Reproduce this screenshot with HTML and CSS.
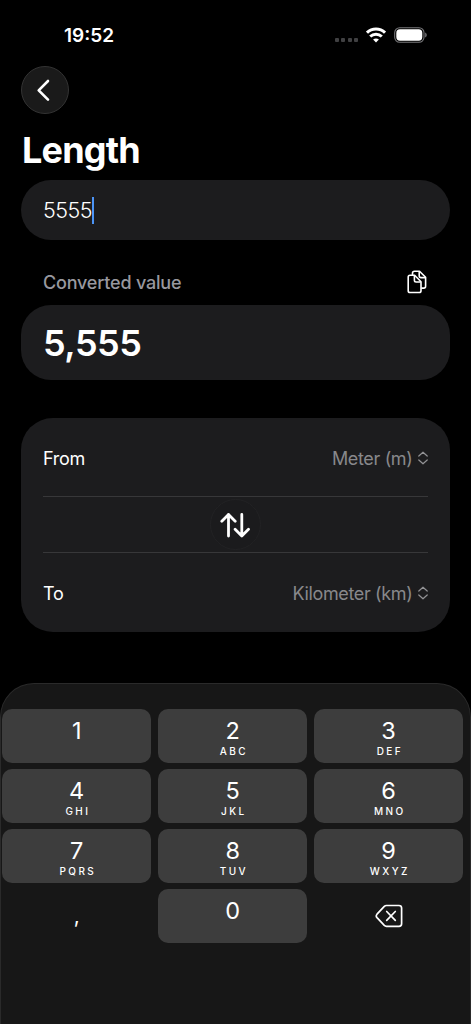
FILE: index.html
```html
<!DOCTYPE html>
<html lang="en">
<head>
<meta charset="utf-8">
<title>Length</title>
<link rel="stylesheet" href="styles.css">
</head>
<body>
<div class="screen">
  <header class="status">
    <span class="clock">19:52</span>
    <div class="status-icons">
      <span class="signal"><i></i><i></i><i></i><i></i></span>
      <svg class="wifi" width="20" height="16" viewBox="0 0 20 16" fill="none" stroke="#fff" stroke-width="3">
        <path d="M1 5.7C6 .9 14 .9 19 5.7"/><path d="M4.2 9.5C7.5 6.4 12.5 6.4 15.8 9.5"/>
        <path d="M10 15.4 7.1 12.5C8.8 11 11.2 11 12.9 12.5Z" fill="#fff" stroke="none"/>
      </svg>
      <svg class="battery" width="34" height="16" viewBox="0 0 34 16">
        <rect x=".7" y=".7" width="29.3" height="14.6" rx="5" fill="none" stroke="#77777a" stroke-width="1.1"/>
        <rect x="2.3" y="2.3" width="26" height="11.4" rx="3.6" fill="#fff"/>
        <path d="M31.2 5.5C33.2 6.2 33.2 9.8 31.2 10.5Z" fill="#77777a"/>
      </svg>
    </div>
  </header>
  <main class="content">
    <button class="back" aria-label="Back">
      <svg width="24" height="24" viewBox="0 0 24 24" fill="none" stroke="#fff" stroke-width="2.6" stroke-linecap="round" stroke-linejoin="round"><path d="M16 3 6.7 12.3 16 21.6"/></svg>
    </button>
    <h1 class="title">Length</h1>
    <div class="field input"><span class="input-value">5555</span><span class="caret"></span></div>
    <div class="label-row">
      <span class="label">Converted value</span>
      <svg class="copy" width="20" height="24" viewBox="0 0 20 24" fill="none" stroke="#fff" stroke-width="1.6" stroke-linejoin="round">
        <path d="M5.5 5V3.2Q5.5 1.2 7.5 1.2H12.5L18.6 7.3V16.3Q18.6 18.1 16.8 18.1H14.2"/>
        <path d="M12.2 1.5V5.8Q12.2 7.6 14 7.6H18.4"/>
        <path d="M3 5.3H7.6L14 11.8V20.7Q14 22.5 12.2 22.5H3Q1.2 22.5 1.2 20.7V7.1Q1.2 5.3 3 5.3Z"/>
        <path d="M7.4 5.6V10.3Q7.4 12 9.1 12H13.8"/>
      </svg>
    </div>
    <div class="field result"><span class="result-value">5,555</span></div>
    <section class="card">
      <div class="unit-row"><span class="name">From</span><span class="unit meter">Meter (m)</span>
        <svg class="updown" width="10" height="14" viewBox="0 0 10 14"><path d="M.8 5 5 1.2 9.2 5M.8 9 5 12.8 9.2 9"/></svg></div>
      <div class="swap-row">
        <button class="swap" aria-label="Swap units">
          <svg width="30" height="26" viewBox="0 0 30 26" fill="none" stroke="#fff" stroke-width="2.8" stroke-linecap="round" stroke-linejoin="round"><path d="M8.5 24V2.5M1.8 9.2 8.5 2.5 15.2 9.2M21.8 2.5V24M15.1 17.3 21.8 24 28.5 17.3"/></svg>
        </button>
      </div>
      <div class="unit-row"><span class="name">To</span><span class="unit kilo">Kilometer (km)</span>
        <svg class="updown" width="10" height="14" viewBox="0 0 10 14"><path d="M.8 5 5 1.2 9.2 5M.8 9 5 12.8 9.2 9"/></svg></div>
    </section>
  </main>
  <div class="keyboard">
    <div class="keys">
      <div class="key"><b>1</b></div>
      <div class="key"><b>2</b><small>ABC</small></div>
      <div class="key"><b>3</b><small>DEF</small></div>
      <div class="key"><b>4</b><small>GHI</small></div>
      <div class="key"><b>5</b><small>JKL</small></div>
      <div class="key"><b>6</b><small>MNO</small></div>
      <div class="key"><b>7</b><small>PQRS</small></div>
      <div class="key"><b>8</b><small>TUV</small></div>
      <div class="key"><b>9</b><small>WXYZ</small></div>
      <div class="key plain comma"><b>,</b></div>
      <div class="key"><b>0</b></div>
      <div class="key plain erase">
        <svg width="28" height="24" viewBox="0 0 28 24" fill="none" stroke="#fff" stroke-width="1.7" stroke-linecap="round" stroke-linejoin="round"><path d="M11.4 1.5H24Q26.6 1.5 26.6 4.1V19.7Q26.6 22.3 24 22.3H11.4Q10.2 22.3 9.3 21.4L2 13.6Q.5 11.9 2 10.2L9.3 2.4Q10.2 1.5 11.4 1.5Z"/><path d="M11.7 7.5 20.3 16.3M20.3 7.5 11.7 16.3"/></svg>
      </div>
    </div>
  </div>
</div>
</body>
</html>
```
FILE: styles.css
```css
* { box-sizing: border-box; }
body { margin: 0; background: #000; color: #fff; font-family: Inter, "Liberation Sans", sans-serif; }
button { padding: 0; color: inherit; font: inherit; }
svg { display: block; flex: none; }
.screen { width: 471px; height: 1024px; display: flex; flex-direction: column; overflow: hidden; background: #000; }

.status { height: 66px; padding: 24px 43px 0 64px; display: flex; align-items: flex-start; justify-content: space-between; flex: none; }
.clock { font-size: 19px; font-weight: 600; line-height: 24px; }
.status-icons { display: flex; align-items: center; margin-top: 2.5px; }
.signal { display: flex; gap: 2.4px; margin: 10px 8px 0 0; }
.signal i { width: 4px; height: 4px; border-radius: 1px; background: #404042; }
.wifi { margin-right: 8px; }

.content { padding: 0 21px; flex: none; height: 617px; }
.back { width: 48px; height: 48px; border-radius: 50%; border: 1px solid #333; background: #1a1a1a; display: flex; align-items: center; justify-content: center; padding-right: 2px; }
.title { margin: 16px 0 10px; padding-left: 1px; font-size: 36px; line-height: 40px; font-weight: 700; height: 40px; letter-spacing: -0.8px; }
.field { background: #1c1c1e; display: flex; align-items: center; padding: 0 22px; }
.input { height: 60px; border-radius: 30px; }
.input-value { font-size: 21.5px; font-weight: 300; letter-spacing: -0.5px; }
.caret { width: 2px; height: 27px; background: #4b93f5; }
.label-row { height: 65px; padding: 20px 23px 0 22px; display: flex; align-items: center; justify-content: space-between; }
.label { color: #98989f; font-size: 18px; font-weight: 550; letter-spacing: -0.2px; }
.copy { margin-top: -1px; }
.result { height: 75px; border-radius: 30px; }
.result-value { font-size: 36px; font-weight: 600; letter-spacing: -0.5px; }
.card { margin-top: 38px; height: 214px; border-radius: 32px; background: #1c1c1e; padding: 0 22px; display: flex; flex-direction: column; }
.unit-row { height: 78px; display: flex; align-items: center; font-size: 18px; padding-top: 2px; }
.name { letter-spacing: -0.3px; }
.unit { color: #88888b; margin-left: auto; margin-right: 5.5px; letter-spacing: -0.35px; }
.updown { fill: none; stroke: #929295; stroke-width: 1.2; stroke-linecap: round; stroke-linejoin: round; }
.swap-row { height: 57px; border-top: 1px solid #373739; border-bottom: 1px solid #373739; display: flex; align-items: center; justify-content: center; }
.swap { width: 51px; height: 51px; border-radius: 50%; border: 1px solid #222224; background: #1b1b1d; display: flex; align-items: center; justify-content: center; padding-right: 1px; }

.keyboard { flex: 1; background: #171717; border: 1px solid #2a2a2a; border-bottom: 0; border-radius: 34px 34px 0 0; padding: 25px 6.7px 0 1px; }
.keys { display: grid; grid-template-columns: repeat(3, 1fr); grid-auto-rows: 53.6px; gap: 6.4px 6.6px; }
.key { background: #3d3d3d; border-radius: 10px; display: flex; flex-direction: column; align-items: center; padding-top: 8px; }
.key b { font-size: 23.5px; line-height: 27px; font-weight: 400; }
.key small { font-size: 10px; line-height: 12px; font-weight: 500; letter-spacing: 2.4px; margin: 1px -2.4px 0 0; }
.plain { background: none; padding: 0; justify-content: center; }
.comma b { font-size: 21px; }
```
